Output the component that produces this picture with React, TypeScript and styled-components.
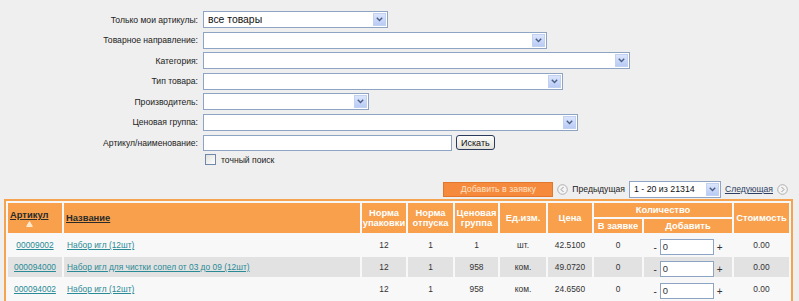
import { Fragment } from "react";
import styled, { createGlobalStyle } from "styled-components";

const GlobalStyle = createGlobalStyle`
    html, body {
        margin: 0;
        padding: 0;
        background: #efefef;
        font-family: "Liberation Sans", Arial, sans-serif;
        color: #222;
    }
`;

const Page = styled.div`
    width: 799px;
    height: 301px;
    overflow: hidden;
    padding-top: 11px;
    box-sizing: border-box;
`;

const Form = styled.div`
    display: grid;
    grid-template-columns: 198px auto;
    column-gap: 5px;
    row-gap: 3.6px;
    align-items: center;
`;

const Label = styled.div`
    text-align: right;
    font-size: 8.6px;
    color: #222;
`;

const Field = styled.div`
    display: flex;
    align-items: center;
    gap: 4px;
`;

const SelectBox = styled.div<{ w: number }>`
    width: ${(p) => p.w}px;
    height: 17px;
    box-sizing: border-box;
    border: 1px solid #8ea4c5;
    background: #fff;
    display: flex;
    align-items: center;
    padding: 0 1px 0 4px;
`;

const SelectText = styled.span<{ small?: boolean }>`
    flex: 1;
    font-size: ${(p) => (p.small ? "8.8px" : "10.4px")};
    color: #111;
    white-space: nowrap;
`;

const ArrowBtn = styled.span`
    width: 13px;
    height: 13px;
    box-sizing: border-box;
    border: 1px solid #c2d1f0;
    background: linear-gradient(#dbe5fc, #b9cbf5);
    display: flex;
    align-items: center;
    justify-content: center;
`;

const TextInput = styled.div<{ w: number }>`
    width: ${(p) => p.w}px;
    height: 16px;
    box-sizing: border-box;
    border: 1px solid #8ea4c5;
    background: #fff;
`;

const SearchButton = styled.button`
    height: 15px;
    padding: 0 4px;
    font-family: "Liberation Sans", Arial, sans-serif;
    font-size: 9px;
    color: #111;
    background: linear-gradient(#fdfdfb, #e3e2da);
    border: 1px solid #2b3b5c;
    border-radius: 3px;
`;

const CheckRow = styled.div`
    display: flex;
    align-items: center;
    gap: 5px;
    padding-left: 2px;
    font-size: 8.6px;
`;

const CheckBox = styled.span`
    width: 11px;
    height: 11px;
    box-sizing: border-box;
    border: 1px solid #6f88ab;
    background: linear-gradient(135deg, #e0e0dc, #ffffff);
`;

const Actions = styled.div`
    display: flex;
    justify-content: flex-end;
    align-items: center;
    gap: 3px;
    padding-right: 11px;
    margin-top: 16px;
    height: 16px;
    font-size: 8.6px;
`;

const AddButton = styled.button`
    width: 110px;
    height: 15px;
    border: 1px solid #e2772c;
    background: #f68a3c;
    color: #fde3c6;
    font-family: "Liberation Sans", Arial, sans-serif;
    font-size: 8.8px;
    padding: 0;
    margin-right: 1px;
`;

const PageLink = styled.span<{ active?: boolean }>`
    color: ${(p) => (p.active ? "#2c3e63" : "#222")};
    text-decoration: ${(p) => (p.active ? "underline" : "none")};
    margin: 0 1px;
`;

const TableFrame = styled.div`
    margin: 2px 0 0 4px;
    width: 789px;
    box-sizing: border-box;
    border: 2px solid #f6a34f;
    border-bottom: none;
    background: #f8f8f8;
`;

const Table = styled.table`
    width: 100%;
    table-layout: fixed;
    border-collapse: separate;
    border-spacing: 2px;
`;

const Th = styled.th<{ link?: boolean; left?: boolean }>`
    background: #f8a04c;
    color: ${(p) => (p.link ? "#2a2a2a" : "#ffffff")};
    font-size: 9.4px;
    font-weight: bold;
    text-align: ${(p) => (p.left ? "left" : "center")};
    padding: 0 ${(p) => (p.left ? "2px" : "0")};
    line-height: 10px;
    height: 14px;
    white-space: nowrap;
`;

const SortHead = styled.span`
    display: inline-flex;
    flex-direction: column;
    align-items: center;
    gap: 1px;
`;

const HeadLink = styled.span`
    text-decoration: underline;
`;

const Tr = styled.tr<{ shade?: boolean }>`
    td {
        background: ${(p) => (p.shade ? "#e2e2e2" : "transparent")};
    }
`;

const Td = styled.td<{ left?: boolean }>`
    height: 20px;
    font-size: 8.4px;
    color: #333;
    text-align: ${(p) => (p.left ? "left" : "center")};
    padding: 0 ${(p) => (p.left ? "3px" : "0")};
    white-space: nowrap;
`;

const RowLink = styled.span`
    color: #2a8a96;
    text-decoration: underline;
`;

const QtyCell = styled.div`
    display: flex;
    align-items: center;
    justify-content: center;
    gap: 3px;
    padding-top: 4px;
    font-size: 10px;
`;

const QtyInput = styled.div`
    width: 54px;
    height: 16px;
    box-sizing: border-box;
    border: 1px solid #8ea4c5;
    background: #fff;
    font-size: 9.4px;
    padding-left: 2px;
    text-align: left;
    line-height: 14px;
`;

function Chevron() {
    return (
        <svg width="7" height="5" viewBox="0 0 7 5">
            <path d="M0.8 0.8 L3.5 3.6 L6.2 0.8" fill="none" stroke="#4b5f86" strokeWidth="1.4" />
        </svg>
    );
}

function Select({ w, value, small }: { w: number; value?: string; small?: boolean }) {
    return (
        <SelectBox w={w}>
            <SelectText small={small}>{value}</SelectText>
            <ArrowBtn>
                <Chevron />
            </ArrowBtn>
        </SelectBox>
    );
}

function NavIcon({ dir }: { dir: "prev" | "next" }) {
    return (
        <svg width="11" height="11" viewBox="0 0 11 11">
            <circle cx="5.5" cy="5.5" r="4.8" fill="#f4f4f4" stroke="#a9a9a9" strokeWidth="0.9" />
            <path
                d={dir === "prev" ? "M6.5 3 L4 5.5 L6.5 8" : "M4.5 3 L7 5.5 L4.5 8"}
                fill="none"
                stroke="#9a9a9a"
                strokeWidth="1"
            />
        </svg>
    );
}

const filters: { label: string; w: number; value?: string }[] = [
    { label: "Только мои артикулы:", w: 185, value: "все товары" },
    { label: "Товарное направление:", w: 344 },
    { label: "Категория:", w: 427 },
    { label: "Тип товара:", w: 360 },
    { label: "Производитель:", w: 166 },
    { label: "Ценовая группа:", w: 375 },
];

const rows = [
    { code: "00009002", name: "Набор игл (12шт)", pack: 12, rel: 1, group: 1, unit: "шт.", price: "42.5100" },
    { code: "000094000", name: "Набор игл для чистки сопел от 03 до 09 (12шт)", pack: 12, rel: 1, group: 958, unit: "ком.", price: "49.0720" },
    { code: "000094002", name: "Набор игл (12шт)", pack: 12, rel: 1, group: 958, unit: "ком.", price: "24.6560" },
];

export default function App() {
    return (
        <Page>
            <GlobalStyle />
            <Form>
                {filters.map((f) => (
                    <Fragment key={f.label}>
                        <Label>{f.label}</Label>
                        <Field>
                            <Select w={f.w} value={f.value} />
                        </Field>
                    </Fragment>
                ))}
                <Label>Артикул/наименование:</Label>
                <Field>
                    <TextInput w={249} />
                    <SearchButton>Искать</SearchButton>
                </Field>
                <div />
                <CheckRow>
                    <CheckBox />
                    точный поиск
                </CheckRow>
            </Form>

            <Actions>
                <AddButton>Добавить в заявку</AddButton>
                <NavIcon dir="prev" />
                <PageLink>Предыдущая</PageLink>
                <Select w={92} value="1 - 20 из 21314" small />
                <PageLink active>Следующая</PageLink>
                <NavIcon dir="next" />
            </Actions>

            <TableFrame>
                <Table>
                    <colgroup>
                        <col style={{ width: 54 }} />
                        <col style={{ width: 296 }} />
                        <col style={{ width: 44 }} />
                        <col style={{ width: 45 }} />
                        <col style={{ width: 43 }} />
                        <col style={{ width: 46 }} />
                        <col style={{ width: 44 }} />
                        <col style={{ width: 48 }} />
                        <col style={{ width: 88 }} />
                        <col style={{ width: 55 }} />
                    </colgroup>
                    <thead>
                        <tr>
                            <Th rowSpan={2} link left>
                                <SortHead>
                                    <HeadLink>Артикул</HeadLink>
                                    <svg width="7" height="6" viewBox="0 0 7 6">
                                        <path d="M3.5 0.6 L6.4 5.4 L0.6 5.4 Z" fill="#fbe7c9" stroke="#fff6e6" strokeWidth="0.8" />
                                    </svg>
                                </SortHead>
                            </Th>
                            <Th rowSpan={2} link left>
                                <HeadLink>Название</HeadLink>
                            </Th>
                            <Th rowSpan={2}>Норма<br />упаковки</Th>
                            <Th rowSpan={2}>Норма<br />отпуска</Th>
                            <Th rowSpan={2}>Ценовая<br />группа</Th>
                            <Th rowSpan={2}>Ед.изм.</Th>
                            <Th rowSpan={2}>Цена</Th>
                            <Th colSpan={2}>Количество</Th>
                            <Th rowSpan={2}>Стоимость</Th>
                        </tr>
                        <tr>
                            <Th>В заявке</Th>
                            <Th>Добавить</Th>
                        </tr>
                    </thead>
                    <tbody>
                        {rows.map((r, i) => (
                            <Tr key={r.code} shade={i === 1}>
                                <Td><RowLink>{r.code}</RowLink></Td>
                                <Td left><RowLink>{r.name}</RowLink></Td>
                                <Td>{r.pack}</Td>
                                <Td>{r.rel}</Td>
                                <Td>{r.group}</Td>
                                <Td>{r.unit}</Td>
                                <Td>{r.price}</Td>
                                <Td>0</Td>
                                <Td>
                                    <QtyCell>
                                        <span>-</span>
                                        <QtyInput>0</QtyInput>
                                        <span>+</span>
                                    </QtyCell>
                                </Td>
                                <Td>0.00</Td>
                            </Tr>
                        ))}
                    </tbody>
                </Table>
            </TableFrame>
        </Page>
    );
}
